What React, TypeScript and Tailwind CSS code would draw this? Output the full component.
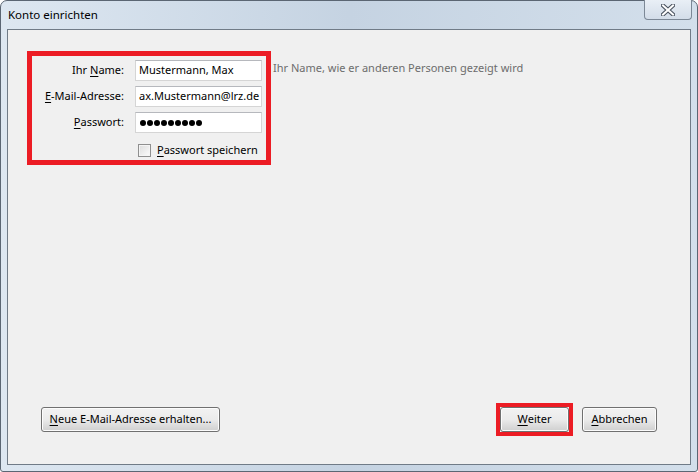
const font = { fontFamily: '"Noto Sans", "Open Sans", sans-serif' };

function WinButton({ label, mnemonic, rest, className }: { label?: string; mnemonic: string; rest: string; className: string }) {
  return (
    <button
      className={`flex h-[25px] items-center justify-center whitespace-nowrap rounded-[3px] border border-[#707070] bg-gradient-to-b from-[#f2f2f2] via-[#ebebeb] to-[#cfcfcf] text-[11px] text-black shadow-[inset_0_0_0_1px_#fcfcfc] ${className}`}
    >
      {label}
      <span className="underline underline-offset-2">{mnemonic}</span>
      {rest}
    </button>
  );
}

function Field({ label, mnemonic, rest, children }: { label: string; mnemonic: string; rest: string; children: React.ReactNode }) {
  return (
    <div className="flex h-[21px] items-center">
      <div className="w-[88px] whitespace-nowrap pr-[1px] text-right text-[11px] text-black">
        {label}
        <span className="underline underline-offset-2">{mnemonic}</span>
        {rest}
      </div>
      <div className="ml-[10px] flex h-[21px] w-[127px] items-center overflow-hidden whitespace-nowrap border border-[#d5d5d5] border-t-[#b6b8bd] bg-white pl-[3px] text-[11px] text-black">
        {children}
      </div>
    </div>
  );
}

export default function App() {
  return (
    <div style={font} className="h-[472px] w-[698px] bg-white">
      <div className="flex h-[472px] w-[698px] flex-col rounded-t-[7px] rounded-b-[3px] border border-[#5b6673] bg-gradient-to-r from-[#dde7f1] via-[#c5d3e2] to-[#d3dfeb] px-[6px] pb-[6px]">
        <div className="relative flex h-[28px] items-center">
          <span className="pl-[1px] text-[11.5px] text-black">Konto einrichten</span>
          <div className="absolute right-[-1px] top-[-1px] flex h-[20px] w-[48px] items-center justify-center rounded-b-[4px] border border-t-0 border-[#7c8896] bg-gradient-to-b from-[#e9eff6] to-[#d3dde9]">
            <svg width="14" height="12" viewBox="0 0 14 12">
              <path d="M2 1.5 L12 10.5 M12 1.5 L2 10.5" stroke="#4a5360" strokeWidth="4.2" strokeLinecap="square" />
              <path d="M2 1.5 L12 10.5 M12 1.5 L2 10.5" stroke="#ffffff" strokeWidth="2" strokeLinecap="square" />
            </svg>
          </div>
        </div>
        <div className="flex flex-1 flex-col border border-[#707b87] bg-[#f0f0f0]">
          <div className="ml-[19px] mt-[21px] flex items-start">
            <div className="flex w-[244px] flex-col border-[5px] border-[#ec1c24] pb-[1px] pl-[5px] pt-[4px]">
              <div className="flex flex-col gap-[5px]">
                <Field label="Ihr " mnemonic="N" rest="ame:">
                  Mustermann, Max
                </Field>
                <Field label="" mnemonic="E" rest="-Mail-Adresse:">
                  ax.Mustermann@lrz.de
                </Field>
                <Field label="" mnemonic="P" rest="asswort:">
                  <div className="ml-[1px] flex gap-[1px]">
                    {Array.from({ length: 9 }).map((_, i) => (
                      <span key={i} className="h-[6px] w-[6px] rounded-full bg-black" />
                    ))}
                  </div>
                </Field>
              </div>
              <div className="ml-[101px] mt-[9px] flex items-center">
                <span className="h-[13px] w-[13px] border border-[#8f8f8f] bg-gradient-to-br from-[#dcdcdc] to-[#fbfbfb] shadow-[inset_0_0_0_1px_#f4f4f4]" />
                <span className="ml-[6px] whitespace-nowrap text-[11px] text-black">
                  <span className="underline underline-offset-2">P</span>asswort speichern
                </span>
              </div>
            </div>
            <span className="ml-[2px] mt-[9px] whitespace-nowrap text-[11px] text-[#6d6d6d]">Ihr Name, wie er anderen Personen gezeigt wird</span>
          </div>
          <div className="mx-[33px] mb-[28px] mt-auto flex items-center">
            <WinButton mnemonic="N" rest="eue E-Mail-Adresse erhalten..." className="w-[179px]" />
            <div className="ml-auto border-[4px] border-[#ec1c24]">
              <WinButton mnemonic="W" rest="eiter" className="w-[69px]" />
            </div>
            <WinButton mnemonic="A" rest="bbrechen" className="ml-[9px] w-[75px]" />
          </div>
        </div>
      </div>
    </div>
  );
}
